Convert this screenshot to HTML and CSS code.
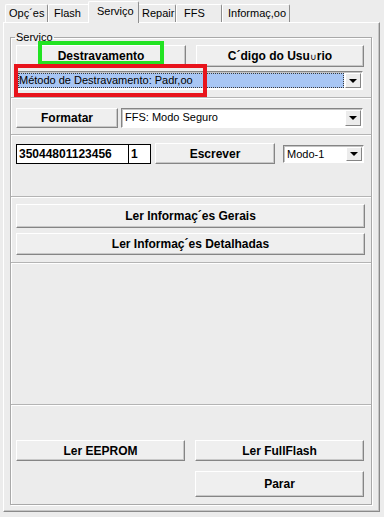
FILE: index.html
```html
<!DOCTYPE html>
<html lang="pt">
<head>
  <meta charset="UTF-8" />
  <title>Serviço</title>
  <link rel="stylesheet" href="styles.css">
</head>
<body>
  <div class="tabs">
    <div class="tab tab-opcoes">Opç´es</div>
    <div class="tab tab-flash">Flash</div>
    <div class="tab tab-active tab-servico">Serviço</div>
    <div class="tab tab-repair">Repair</div>
    <div class="tab tab-ffs">FFS</div>
    <div class="tab tab-info">Informaç,oo</div>
  </div>

  <div class="panel">
    <fieldset class="group">
      <legend>Servico</legend>

      <div class="section section-unlock">
        <div class="pair">
          <button class="btn">Destravamento</button>
          <button class="btn">C´digo do Usu<span class="cup">∪</span>rio</button>
        </div>
        <div class="combo combo-method">
          <span class="combo-value combo-focus">Método de Destravamento: Padr,oo</span>
          <span class="combo-btn"><span class="arrow"></span></span>
        </div>
        <div class="mark mark-green"></div>
        <div class="mark mark-red"></div>
      </div>

      <div class="section section-format">
        <div class="row">
          <button class="btn btn-format">Formatar</button>
          <div class="combo combo-ffs">
            <span class="combo-value">FFS: Modo Seguro</span>
            <span class="combo-btn"><span class="arrow"></span></span>
          </div>
        </div>
      </div>

      <div class="section section-write">
        <div class="row">
          <div class="field field-imei">35044801123456</div>
          <div class="field field-count">1</div>
          <button class="btn btn-write">Escrever</button>
          <div class="combo combo-mode">
            <span class="combo-value">Modo-1</span>
            <span class="combo-btn"><span class="arrow"></span></span>
          </div>
        </div>
      </div>

      <div class="section section-info">
        <button class="btn btn-wide btn-tall">Ler Informaç´es Gerais</button>
        <button class="btn btn-wide">Ler Informaç´es Detalhadas</button>
      </div>

      <div class="section section-empty"></div>

      <div class="section section-read">
        <div class="pair pair-even">
          <button class="btn">Ler EEPROM</button>
          <button class="btn">Ler FullFlash</button>
          <span></span>
          <button class="btn btn-stop">Parar</button>
        </div>
      </div>
    </fieldset>
  </div>
</body>
</html>
```

FILE: styles.css
```css
body {
  margin: 0;
  background-color: #ececec;
  font-family: "Liberation Sans", Arial, sans-serif;
  font-size: 11px;
  color: #000;
}

/* Reiter oben */
.tabs {
  display: flex;
  align-items: flex-end;
  height: 22px;
  padding-left: 5px;
}
.tab {
  box-sizing: border-box;
  height: 18px;
  line-height: 16px;
  border-top: 1px solid #fff;
  border-left: 1px solid #fff;
  border-right: 1px solid #8e8e8e;
  border-radius: 2px 2px 0 0;
  white-space: nowrap;
}
.tab-active {
  position: relative;
  z-index: 1;
  height: 22px;
  line-height: 18px;
  margin: 0 -2px -1px -2px;
  background-color: #ececec;
}
.tab-opcoes { width: 43px; padding-left: 3px; }
.tab-flash { width: 42px; padding-left: 5px; }
.tab-servico { width: 51px; padding-left: 8px; }
.tab-repair { width: 39px; padding-left: 4px; }
.tab-ffs { width: 46px; padding-left: 7px; }
.tab-info { width: 68px; padding-left: 5px; }

.panel {
  box-sizing: border-box;
  width: 377px;
  margin-left: 3px;
  padding: 8px 7px 6px 6px;
  border: 1px solid;
  border-color: #fff #8a8a8a #8a8a8a #fff;
  box-shadow: inset -1px -1px 0 #c6c6c6;
}

.group {
  margin: 0;
  padding: 0;
  min-width: 0;
  border: 1px solid #a9a9a9;
  box-shadow: inset 1px 1px 0 #fff, 1px 1px 0 #fff;
}
.group legend {
  margin-left: 4px;
  padding: 0 1px;
  line-height: 13px;
}

.section {
  position: relative;
  padding: 0 6px 0 5px;
  border-top: 1px solid #b4b4b4;
  box-shadow: inset 0 1px 0 #fff;
}
.section-unlock {
  border-top: none;
  box-shadow: none;
  padding-top: 1px;
  padding-bottom: 7px;
}
.section-format { padding-top: 10px; padding-bottom: 6px; }
.section-write { padding-top: 8px; padding-bottom: 32px; }
.section-info { padding-top: 7px; padding-bottom: 7px; }
.section-empty { height: 141px; }
.section-read { padding-top: 35px; padding-bottom: 7px; }

.pair {
  display: grid;
  grid-template-columns: 170px 168px;
  column-gap: 10px;
  row-gap: 10px;
}
.pair-even {
  grid-template-columns: 169px 169px;
}
.row {
  display: flex;
  align-items: center;
}

/* Schaltflächen im Windows-Stil */
.btn {
  box-sizing: border-box;
  height: 22px;
  padding: 0;
  font-family: "Liberation Sans", Arial, sans-serif;
  font-size: 12px;
  font-weight: bold;
  color: #000;
  background-color: #efefef;
  border: 1px solid;
  border-color: #fff #858585 #858585 #fff;
  box-shadow: inset -1px -1px 0 #c8c8c8;
}
.btn-format { width: 102px; height: 20px; }
.btn-write { width: 120px; height: 21px; margin-left: 4px; }
.btn-wide { display: block; width: 349px; }
.btn-tall { height: 24px; margin-bottom: 5px; }
.section-read .btn { height: 21px; }
.section-read .btn-stop { height: 26px; }
.cup { font-size: 9px; font-weight: normal; }

.combo {
  box-sizing: border-box;
  display: flex;
  height: 19px;
  padding: 1px;
  background-color: #fff;
  border: 1px solid;
  border-color: #858585 #fff #fff #858585;
  box-shadow: inset 1px 1px 0 #c4c4c4;
}
.combo-method { width: 347px; margin-top: 4px; }
.combo-ffs { width: 242px; height: 20px; margin-left: 3px; }
.combo-mode { width: 81px; height: 18px; margin-left: 8px; }
.combo-value {
  flex: 1;
  padding-left: 2px;
  line-height: 15px;
  white-space: nowrap;
  overflow: hidden;
}
.combo-focus {
  background-color: #a8c6f4;
  outline: 1px dotted #3a3a3a;
  outline-offset: -1px;
  padding-left: 1px;
}
.combo-btn {
  box-sizing: border-box;
  display: flex;
  align-items: center;
  justify-content: center;
  width: 16px;
  margin-left: 1px;
  background-color: #ececec;
  border: 1px solid;
  border-color: #fff #858585 #858585 #fff;
}
.arrow {
  width: 0;
  height: 0;
  border-left: 4px solid transparent;
  border-right: 4px solid transparent;
  border-top: 4px solid #000;
}

.field {
  box-sizing: border-box;
  height: 20px;
  line-height: 18px;
  padding-left: 2px;
  background-color: #fff;
  border: 1px solid #000;
  font-size: 12px;
  font-weight: bold;
}
.field-imei { width: 113px; }
.field-count { width: 22px; border-left: none; }

/* Markierungen über dem Inhalt */
.mark {
  position: absolute;
  box-sizing: border-box;
  border: 4px solid;
  pointer-events: none;
}
.mark-green {
  left: 27px;
  top: -3px;
  width: 126px;
  height: 24px;
  border-color: #22e322;
}
.mark-red {
  left: 3px;
  top: 20px;
  width: 193px;
  height: 33px;
  border-color: #e8141c;
}
```
